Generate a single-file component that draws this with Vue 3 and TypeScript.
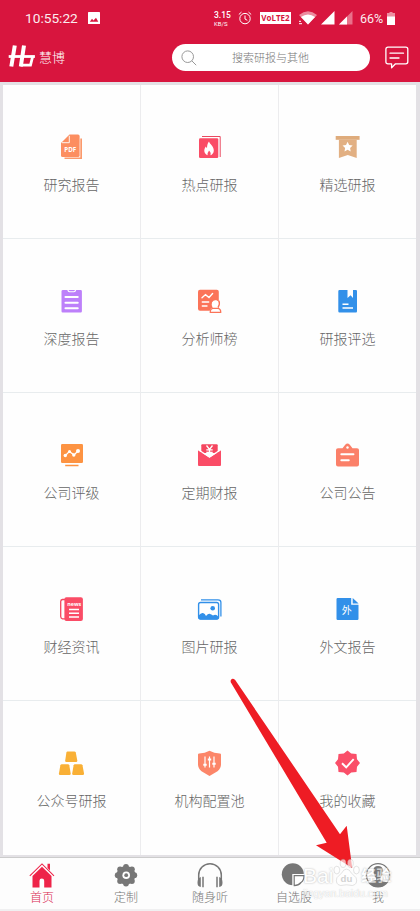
<script setup lang="ts">
interface Entry {
  label: string
  art: string
}

const entries: Entry[] = [
  {
    label: '研究报告',
    art: `<path d="M22.3 5.5H24V26H6.5V24.6H22.3Z" fill="#fb9a6c"/><path d="M11.5 1.5H20a1.6 1.6 0 0 1 1.6 1.6V22.4A1.6 1.6 0 0 1 20 24H4.6A1.6 1.6 0 0 1 3 22.4V10Z" fill="#fc8e60"/><path d="M11.3 2.8V9.7H4" fill="none" stroke="#fff" stroke-width=".9"/><text x="12.3" y="18.9" text-anchor="middle" font-size="6.2" font-weight="700" fill="#fff" font-family="Open Sans, sans-serif">PDF</text>`
  },
  {
    label: '热点研报',
    art: `<path d="M6 3.5H24.2V24" fill="none" stroke="#e94a60" stroke-width="1"/><rect x="3" y="5.3" width="19.3" height="19.7" rx="1.3" fill="#fa4c66"/><path d="M13 8.6c.8 2.6 4.6 4.6 4.8 8.6.1 2.8-1.6 4.5-3.4 5 .8-2.3-.2-3.6-1.4-4.8-.7 1.7-2 2.8-1.3 4.8-2.3-.7-3.5-2.4-3.4-4.6.1-1.7.8-3 1.6-4 .3.8.6 1.2 1.1 1.5.1-2.6.7-5 2-6.5Z" fill="#fff"/>`
  },
  {
    label: '精选研报',
    art: `<path d="M1.7 3H25.6V6.8H1.7Z" fill="#dfac7c"/><path d="M4.9 6.8H22.7V25.1L13.8 21.9 4.9 25.1Z" fill="#e2b083"/><path d="m13.6 8.7 1.55 3.2 3.5.5-2.55 2.5.6 3.5-3.1-1.65-3.1 1.65.6-3.5-2.55-2.5 3.5-.5Z" fill="#fff"/>`
  },
  {
    label: '深度报告',
    art: `<path d="M5 3H9.300Q9.700 5.300 11.500 5.300H16Q17.800 5.300 18.200 3H22.700Q23.900 3 23.900 4.200V24.300Q23.900 25.500 22.700 25.500H4.700Q3.500 25.500 3.500 24.300V4.200Q3.500 3 5 3Z" fill="#bd80fa"/><path d="M10.500 3H17Q16.500 4.200 15.500 4.200H12Q11 4.200 10.500 3Z" fill="#bd80fa"/><path d="M7.500 10H19.700M7.500 15.700H19.700M7.500 21.300H19.700" stroke="#fff" stroke-width="2.100" stroke-linecap="round"/>`
  },
  {
    label: '分析师榜',
    art: `<rect x="2" y="2.700" width="20.800" height="21" rx="2" fill="#fb7459"/><path d="m6 10.800 3.500-3.200 3.500 2.900 3.600-4M6.300 15H12.700M6.300 19H11" fill="none" stroke="#fff" stroke-width="1.400" stroke-linecap="round"/><path d="M13.500 26.300Q13.300 21.500 16.800 20.800 14.900 18.300 16 15.500 17.400 12.800 20.200 13.300 24 14.400 23.300 18.500 22.900 20 22 20.800 25.300 21.500 25.400 26.300Z" fill="#fff"/><circle cx="19.600" cy="17.300" r="3.600" fill="#fff"/><path d="M22.900 13.800Q24.300 17.200 22 20.300M14.300 25.300Q14 21.700 17 21.300H21.900Q24.900 21.700 24.700 25.300Z" fill="none" stroke="#fb7459" stroke-width="1.300"/>`
  },
  {
    label: '研报评选',
    art: `<path d="M5.500 3H13.500V11L16.600 8.300 19 11V3H22Q23 3 23 4.200V24.300Q23 25.500 22 25.500H5.500Q4.300 25.500 4.300 24.300V4.200Q4.300 3 5.500 3Z" fill="#3290e9"/><path d="M8.500 17.200H14.500M8.500 21H19" stroke="#fff" stroke-width="1.600"/>`
  },
  {
    label: '公司评级',
    art: `<rect x="3" y="3" width="22" height="18.900" rx="1.200" fill="#fd9342"/><path d="M7.500 14.400 11.300 10.500 16 13.900 20.300 9.700" fill="none" stroke="#fff" stroke-width="1.300"/><g fill="#fff"><circle cx="7.300" cy="14.500" r="1.700"/><circle cx="11.500" cy="10.500" r="1.500"/><circle cx="15.800" cy="14" r="1.700"/><circle cx="20" cy="9.900" r="2"/></g><path d="M7.200 24.500H20.500" stroke="#fd9342" stroke-width="1.500"/>`
  },
  {
    label: '定期财报',
    art: `<path d="M5.300 4.200Q5.300 3.200 6.300 3.200H20.700Q21.700 3.200 21.700 4.200V12H5.300Z" fill="#f5465f"/><path d="M2 9.300 13.500 16.800 25 9.300V24Q25 25 24 25H3Q2 25 2 24Z" fill="#fa4c66"/><path d="M2.800 9 13.500 16 24.200 9" fill="none" stroke="#fff" stroke-width="1.200"/><path d="m10.500 4.500 3 4 3-4M13.500 8.500V14M10.300 8.800H16.700M10.300 11.500H16.700" fill="none" stroke="#fff" stroke-width="1.300"/>`
  },
  {
    label: '公司公告',
    art: `<path d="M4 7.200H8.500L11.200 3.700Q13.500 1.500 15.800 3.700L18.500 7.200H23Q25 7.200 25 9V23.500Q25 25.500 23 25.500H4Q2 25.500 2 23.500V9Q2 7.200 4 7.200Z" fill="#fb8069"/><circle cx="13.500" cy="6.500" r="1.200" fill="#fff"/><path d="M7.300 13.300H19.500M7.300 19.200H14.800" stroke="#fff" stroke-width="1.900" stroke-linecap="round"/>`
  },
  {
    label: '财经资讯',
    art: `<path d="M7 4.500H4.500Q2.700 4.800 2.700 6.500V21.500Q2.800 23.500 4.500 23.900H7" fill="none" stroke="#f5465f" stroke-width="1.300"/><rect x="6.400" y="2.300" width="18.500" height="23.700" rx="2" fill="#fa4c66"/><text x="16.200" y="10.500" text-anchor="middle" font-size="5.400" font-weight="700" fill="#fff" font-family="Open Sans, sans-serif">news</text><path d="M11 14.500H21M11 18.300H21M11 22H21" stroke="#fff" stroke-width="1.500"/>`
  },
  {
    label: '图片研报',
    art: `<path d="M5 4.900H22Q24.900 4.900 24.900 7.500V21.500" fill="none" stroke="#3290e9" stroke-width="1.300"/><rect x="2.600" y="7.500" width="20" height="16.500" rx="2" fill="#fff" stroke="#3290e9" stroke-width="1.400"/><circle cx="16.700" cy="13.200" r="2.300" fill="#3290e9"/><path d="M2.600 20.500Q5 17.500 7 18 9 18.500 10 21 12 18.500 13.500 18.700 15.500 19.500 17 20.500 20 18.300 22.600 22V23.500Q22 24.500 21 24.500H4.500Q2.600 24.500 2.600 22.500Z" fill="#3290e9"/>`
  },
  {
    label: '外文报告',
    art: `<path d="M3.700 3H17.200V9.800H24.500V23.800Q24.500 25 23.300 25H3.700Q2.500 25 2.500 23.800V4.200Q2.500 3 3.700 3Z" fill="#3290e9"/><path d="M18.700 3 24.600 8.500H18.700Z" fill="#3290e9"/><text x="12.700" y="18.900" text-anchor="middle" font-size="10" font-weight="400" fill="#fff" font-family="Noto Sans CJK SC, sans-serif">外</text>`
  },
  {
    label: '公众号研报',
    art: `<g fill="#f9b036"><path d="M9.500 2.400H16.300Q17.400 2.400 17.800 3.500L19.300 11.500Q19.400 13 18.200 13H8.300Q7 13 7.200 11.500L8.400 3.500Q8.700 2.400 9.500 2.400Z"/><path d="M3.800 15.200H9.900Q11 15.200 11.300 16.200L12.700 24.500Q12.800 26 11.500 26H2Q.8 26 .9 24.500L2.400 16.200Q2.700 15.200 3.800 15.200Z"/><path d="M16.900 15.200H23Q24.100 15.200 24.500 16.200L26 24.500Q26.100 26 24.800 26H15.400Q14.100 26 14.200 24.500L15.600 16.200Q15.900 15.200 16.900 15.200Z"/></g>`
  },
  {
    label: '机构配置池',
    art: `<path d="M13.500 1.800Q18 4.400 23.800 4.400 25 4.400 25 5.500V15.500Q25 19.200 21.500 22.200L13.500 27 5.500 22.200Q2 19.200 2 15.500V5.500Q2 4.400 3.200 4.400 9 4.400 13.500 1.800Z" fill="#fc8669"/><path d="M9 7.500V18.500M13.500 7.500V18.500M18 7.500V18.500" stroke="#fff" stroke-width="1.200"/><path d="M7.300 15.700H10.700M11.800 10.500H15.200M16.300 14.800H19.700" stroke="#fff" stroke-width="2"/>`
  },
  {
    label: '我的收藏',
    art: `<path d="m13.500 1.500 3.700 3.100 5.300.5.500 5.200 3 3.700-3 3.700-.5 5.200-5.300.5-3.700 3.100-3.700-3.100-5.300-.5-.5-5.200L1 14l3-3.700.5-5.200 5.300-.5Z" fill="#fa4f69"/><path d="m8 14.300 4.200 4 7.500-8.200" fill="none" stroke="#fff" stroke-width="1.900"/>`
  }
]

interface Tab {
  label: string
  art: string
  active?: boolean
}

const tabs: Tab[] = [
  {
    label: '首页',
    active: true,
    art: `<path d="M4.500 14V25.500H11.500V18.800Q11.500 16.500 13.800 16.500 16.200 16.500 16.200 18.800V25.500H23.500V14L14 4.700Z" fill="#ee2449"/><path d="M1.800 13.800 14 1.900 26 13.800" fill="none" stroke="#ee2449" stroke-width="1.100"/><path d="M19.500 1.800H22V8.500L19.500 6Z" fill="#ee2449"/>`
  },
  {
    label: '定制',
    art: `<circle cx="14" cy="13.200" r="9.300" fill="#777"/><g fill="#777"><circle cx="14" cy="4.900" r="2.900"/><circle cx="19.900" cy="7.300" r="2.900"/><circle cx="22.300" cy="13.200" r="2.900"/><circle cx="19.900" cy="19.100" r="2.900"/><circle cx="14" cy="21.500" r="2.900"/><circle cx="8.100" cy="19.100" r="2.900"/><circle cx="5.700" cy="13.200" r="2.900"/><circle cx="8.100" cy="7.300" r="2.900"/></g><circle cx="14.200" cy="13.200" r="3.800" fill="#fff"/><circle cx="14.200" cy="13.200" r="1.900" fill="#777"/>`
  },
  {
    label: '随身听',
    art: `<path d="M2.700 18V13A11.300 11.300 0 0 1 25.300 13V18" fill="none" stroke="#777" stroke-width="1.500"/><path d="M4.800 15V25Q1.300 24.500 1.500 20.500 1.500 16 4.800 15ZM23.200 15V25Q26.700 24.500 26.500 20.500 26.500 16 23.200 15Z" fill="#777"/><path d="M7 14.800V25.300M21 14.800V25.300" stroke="#777" stroke-width="1.500"/>`
  },
  {
    label: '自选股',
    art: `<circle cx="12.800" cy="12.300" r="11" fill="#777"/><path d="M13.300 12.900H24.700Q24.300 23.500 13.300 24.200Z" fill="#fff" stroke="#fff" stroke-width="2"/><path d="M14.200 13.700H24Q24 18.500 21 20.500 18.500 23.500 14.200 23.700Z" fill="#fff" stroke="#777" stroke-width="1.200"/>`
  },
  {
    label: '我',
    art: `<circle cx="14" cy="13.300" r="11.600" fill="#fff" stroke="#777" stroke-width="1.300"/><path d="M9.500 8Q9.700 4.200 14 4.100 18.600 4.200 18.700 8L18.200 13Q17.300 15.300 16.200 15.800V18Q21 19.200 23 20.500 19.500 25 14 25 8.500 25 5 20.500 7.500 19.200 12 18V15.800Q10.700 15.200 10 13Z" fill="#777"/>`
  }
]
</script>

<template>
  <main class="screen">
    <header class="top">
      <div class="status">
        <span class="clock">10:55:22</span>
        <svg class="photo" viewBox="0 0 12 12"><rect width="12" height="12" rx=".6" fill="#fff" /><path d="M1.800 9.800 4 6.700 5.500 8.500 8 5.800 10.300 9.800Z" fill="#d8163f" /></svg>
        <span class="speed"><b>3.15</b><small>KB/S</small></span>
        <svg class="alarm" viewBox="0 0 14 14"><g fill="none" stroke="#fff" stroke-width="1"><circle cx="7" cy="7.600" r="5.200" /><path d="M7 4.500V8L9.300 9.300M.8 3.500 3.500 1.100M10.500 1.100 13.200 3.500" /></g></svg>
        <span class="volte">VoLTE2</span>
        <svg class="signal" viewBox="0 0 54 14">
          <path d="M0 4Q9-3.300 18 4L9 13.500Z" fill="#ec8a9e" /><path d="M1.900 6Q9 .8 16.100 6L9 13.500Z" fill="#fff" />
          <path d="M0 10.300H2M0 12.700H3" stroke="#fff" stroke-width="1" />
          <path d="M22 13.500 35.500 0V13.500Z" fill="#fff" />
          <path d="M40 13.500 53.500 0V13.500Z" fill="#e9718a" /><path d="M40 13.500 48 5.500V13.500Z" fill="#fff" />
        </svg>
        <span class="percent">66%</span>
        <svg class="battery" viewBox="0 0 8 13"><path d="M2.500 0H5.500V1H8V5H0V1H2.500Z" fill="#ed8ea1" /><path d="M0 4.500H8V13H0Z" fill="#fff" /></svg>
      </div>
      <div class="bar">
        <svg class="logo" viewBox="0 0 28 24"><g fill="none" stroke="#fff"><path d="M6.800 1.500 3.300 22.500M16 1.500 12.800 22.500" stroke-width="4" /><path d="M.700 12.500H26.900" stroke-width="2.800" /><path d="M24.800 12 22.500 21.200H12.500" stroke-width="2.800" /></g></svg>
        <span class="brand">慧博</span>
        <div class="search">
          <svg viewBox="0 0 16 16"><g fill="none" stroke="#999" stroke-width="1"><circle cx="6.700" cy="6.700" r="5.800" /><path d="m10.800 10.800 4.400 4.400" /></g></svg>
          <span>搜索研报与其他</span>
        </div>
        <svg class="chat" viewBox="0 0 24 24"><g fill="none" stroke="#fff" stroke-width="1.300" stroke-linejoin="round" stroke-linecap="round"><path d="M3 1.200H20.700Q22.800 1.200 22.800 3.300V15.700Q22.800 17.800 20.700 17.800H10.500L6.600 21.700V17.800H3Q.9 17.800.9 15.700V3.300Q.9 1.200 3 1.200Z" /><path d="M5 7.200H18.500M5 12H14" /></g></svg>
      </div>
    </header>

    <section class="grid">
      <div v-for="entry in entries" :key="entry.label" class="cell">
        <svg class="glyph" viewBox="0 0 28 28" v-html="entry.art"></svg>
        <span>{{ entry.label }}</span>
      </div>
    </section>

    <nav class="tabs">
      <div v-for="tab in tabs" :key="tab.label" class="tab" :class="{ active: tab.active }">
        <svg class="glyph" viewBox="0 0 28 28" v-html="tab.art"></svg>
        <span>{{ tab.label }}</span>
      </div>
    </nav>

    <svg class="arrow" viewBox="225 675 135 200"><path d="M235.200 680Q232.500 677.500 230.900 680 230.200 681.500 231.200 683L326.700 842.700 316 845.300 352.200 868 346.700 825.700 340 834.200Z" fill="#ee1c24" /></svg>

    <div class="mark">
      <div class="mark-row">
        <span>Bai</span>
        <svg viewBox="0 0 28 30"><g fill="#fff" stroke="#999" stroke-opacity=".6" stroke-width=".7"><ellipse cx="4" cy="13" rx="3" ry="4" /><ellipse cx="10.500" cy="6" rx="3" ry="4.300" /><ellipse cx="18" cy="6" rx="3" ry="4.300" /><ellipse cx="24.300" cy="13" rx="3" ry="4" /><path d="M14 12Q17 12 19 16L24 21Q26 28 20 29 14 27.500 8 29 2 28 4 21L9 16Q11 12 14 12Z" /></g><text x="14" y="25.500" text-anchor="middle" font-size="10" font-weight="700" fill="#bbb" font-family="Liberation Sans, sans-serif">du</text></svg>
        <span class="cn">经验</span>
      </div>
      <div class="mark-url">jingyan.baidu.com</div>
    </div>
  </main>
</template>

<style>
body {
  margin: 0;
  background: #f5f5f6;
}
</style>

<style scoped>
.screen {
  position: relative;
  box-sizing: border-box;
  width: 420px;
  height: 911px;
  overflow: hidden;
  display: flex;
  flex-direction: column;
  background: #e3e1e5;
  font-family: Roboto, "Noto Sans CJK SC", sans-serif;
}

svg {
  display: block;
  flex: none;
}

.top {
  height: 82px;
  flex: none;
  background: #d8153e;
  color: #fff;
}

.status {
  height: 36px;
  display: flex;
  align-items: center;
  padding-left: 25px;
  white-space: nowrap;
}

.clock {
  width: 63px;
  font-size: 13.7px;
  opacity: 0.92;
}

.photo {
  width: 12px;
  height: 12px;
}

.speed {
  display: flex;
  flex-direction: column;
  width: 24px;
  margin-left: 114px;
  font-size: 8.5px;
  line-height: 10px;
}

.speed b {
  font-weight: 500;
}

.speed small {
  font-size: 6px;
  line-height: 7px;
}

.alarm {
  width: 14px;
  height: 14px;
}

.volte {
  width: 31px;
  height: 12px;
  margin-left: 8px;
  background: #fff;
  color: #d8153e;
  font-family: "Open Sans", sans-serif;
  font-size: 8px;
  font-weight: 700;
  line-height: 12px;
  text-align: center;
}

.signal {
  width: 54px;
  height: 14px;
  margin-left: 8px;
}

.percent {
  width: 27px;
  margin-left: 7px;
  font-size: 12.5px;
  opacity: 0.92;
}

.battery {
  width: 8px;
  height: 13px;
}

.bar {
  height: 43px;
  display: flex;
  align-items: center;
}

.logo {
  width: 28px;
  height: 24px;
  margin-left: 8px;
  margin-top: -4px;
}

.brand {
  width: 133px;
  margin-left: 3px;
  margin-top: -2px;
  font-size: 13px;
  font-weight: 300;
}

.search {
  box-sizing: border-box;
  width: 198px;
  height: 27px;
  display: flex;
  align-items: center;
  padding-left: 9px;
  gap: 35px;
  border-radius: 14px;
  background: #fff;
  color: #777;
  font-size: 11px;
  font-weight: 300;
}

.search svg {
  width: 16px;
  height: 16px;
}

.search span {
  margin-top: -1px;
}

.chat {
  width: 24px;
  height: 24px;
  margin-left: 15px;
  margin-top: 1px;
}

.grid {
  height: 770px;
  flex: none;
  margin: 3px 4px 0 3px;
  display: grid;
  grid-template-columns: 138px 138px 137px;
  grid-template-rows: repeat(5, 154px);
  background: #fefefe;
}

.cell {
  box-sizing: border-box;
  display: flex;
  flex-direction: column;
  align-items: center;
  padding-top: 48px;
  gap: 13px;
  border-right: 1px solid #ececee;
  border-bottom: 1px solid #e8ecee;
  color: #666;
  font-size: 14px;
  font-weight: 300;
  line-height: 22px;
}

.cell:nth-child(3n) {
  border-right: 0;
}

.cell:nth-child(n + 13) {
  border-bottom: 0;
}

.glyph {
  width: 28px;
  height: 28px;
}

.tabs {
  height: 51px;
  flex: none;
  margin-top: 2px;
  border-top: 1px solid #ccc;
  border-bottom: 2px solid #f0f0f1;
  display: grid;
  grid-template-columns: repeat(5, 84px);
  background: #fdfdfd;
}

.tab {
  display: flex;
  flex-direction: column;
  align-items: center;
  padding-top: 4px;
  color: #777;
  font-size: 12px;
  font-weight: 300;
  line-height: 16px;
}

.active {
  color: #d92950;
}

.arrow {
  position: absolute;
  left: 225px;
  top: 675px;
  width: 135px;
  height: 200px;
}

.mark {
  position: absolute;
  left: 303px;
  top: 857px;
  width: 92px;
  color: #fff;
  opacity: 0.65;
  font-family: "Liberation Sans", "Noto Sans CJK SC", sans-serif;
  text-shadow: 0 0 2px #888;
}

.mark-row {
  display: flex;
  align-items: flex-end;
  height: 30px;
  font-size: 21px;
  line-height: 22px;
}

.mark-row svg {
  width: 27px;
  height: 30px;
  text-shadow: none;
}

.cn {
  margin-left: 1px;
  font-size: 15px;
  font-weight: 700;
}

.mark-url {
  font-size: 10.5px;
  line-height: 13px;
  text-shadow: 0 0 1px #999;
}
</style>
